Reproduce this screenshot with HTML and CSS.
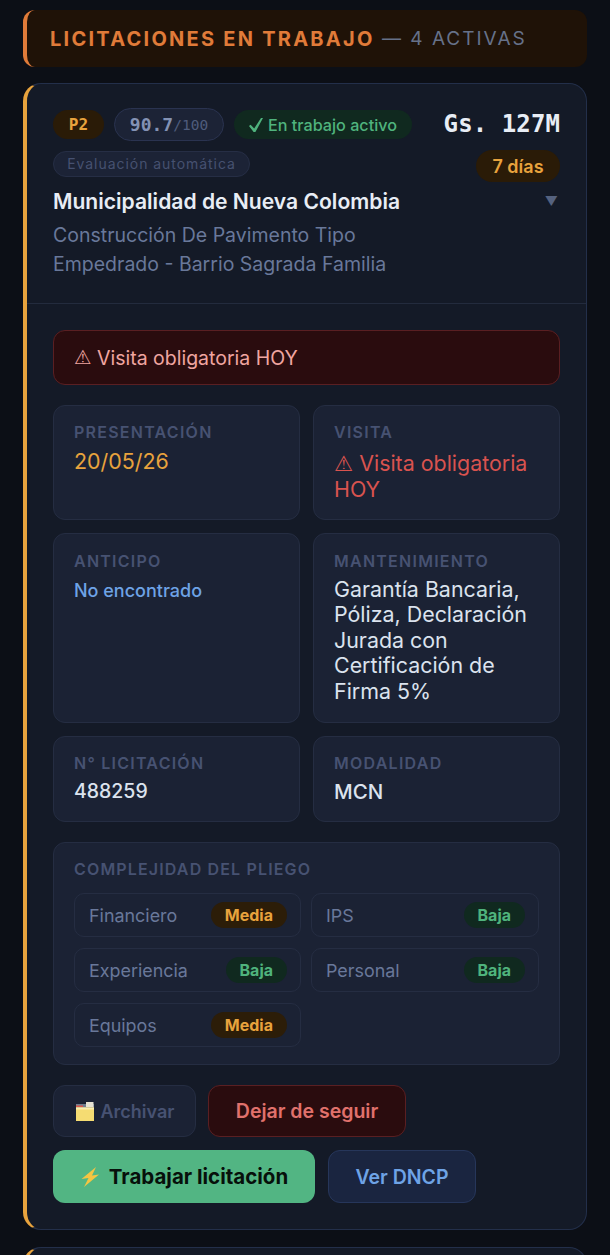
FILE: index.html
```html
<!DOCTYPE html>
<html lang="es">
<head>
<meta charset="utf-8">
<title>Licitaciones en trabajo</title>
<link rel="stylesheet" href="styles.css">
</head>
<body>
<main class="page">
  <header class="section-head">
    <strong>LICITACIONES EN TRABAJO</strong><span class="section-count"> — 4 ACTIVAS</span>
  </header>

  <article class="card">
    <div class="card-head">
      <div class="head-top">
        <div class="pills">
          <span class="pill pill-p">P2</span>
          <span class="pill pill-score"><b>90.7</b><i>/100</i></span>
          <span class="pill pill-active">
            <svg class="ico-check" viewBox="0 0 14 14" width="14" height="14" aria-hidden="true">
              <path fill="currentColor" d="M12 0h2L6.4 14H4.6L0 8l1.6-1.2 3.6 3.6z"/>
            </svg>
            <span>En trabajo activo</span>
          </span>
          <span class="pill pill-auto">Evaluación automática</span>
        </div>
        <div class="head-right">
          <span class="amount">Gs. 127M</span>
          <span class="pill pill-days">7 días</span>
        </div>
      </div>
      <div class="title-row">
        <h2>Municipalidad de Nueva Colombia</h2>
        <span class="caret">▼</span>
      </div>
      <p class="desc">Construcción De Pavimento Tipo<br>Empedrado - Barrio Sagrada Familia</p>
    </div>

    <div class="card-body">
      <div class="alert"><span class="warn">⚠</span> Visita obligatoria HOY</div>

      <div class="grid">
        <div class="cell cell-a">
          <div class="label">PRESENTACIÓN</div>
          <div class="value-amber">20/05/26</div>
        </div>
        <div class="cell cell-a">
          <div class="label">VISITA</div>
          <div class="value-red"><span class="warn">⚠</span> Visita obligatoria HOY</div>
        </div>
        <div class="cell cell-b">
          <div class="label">ANTICIPO</div>
          <div class="value-blue">No encontrado</div>
        </div>
        <div class="cell cell-b">
          <div class="label">MANTENIMIENTO</div>
          <div class="value-white">Garantía Bancaria, Póliza, Declaración Jurada con Certificación de Firma 5%</div>
        </div>
        <div class="cell cell-c">
          <div class="label">N° LICITACIÓN</div>
          <div class="value-num">488259</div>
        </div>
        <div class="cell cell-c">
          <div class="label">MODALIDAD</div>
          <div class="value-mod">MCN</div>
        </div>
      </div>

      <section class="complex">
        <div class="label label-wide">COMPLEJIDAD DEL PLIEGO</div>
        <div class="complex-grid">
          <div class="item"><span>Financiero</span><b class="tag tag-m">Media</b></div>
          <div class="item"><span>IPS</span><b class="tag tag-b">Baja</b></div>
          <div class="item"><span>Experiencia</span><b class="tag tag-b">Baja</b></div>
          <div class="item"><span>Personal</span><b class="tag tag-b">Baja</b></div>
          <div class="item"><span>Equipos</span><b class="tag tag-m">Media</b></div>
        </div>
      </section>

      <div class="actions">
        <button class="btn btn-archive">
          <svg class="ico-folder" viewBox="0 0 20 21" width="20" height="21" aria-hidden="true">
            <path fill="#6f7c8f" d="M1 3h18v5H1z"/>
            <path fill="#e6e2d2" d="M11 1h7.5v5H11z"/>
            <path fill="#d9574a" d="M1 4.5h7V6H1z"/>
            <path fill="#f5dc72" d="M1 6.5h18V20H1z"/>
            <path fill="#fbeeb0" d="M1 6.5h18v2H1z"/>
          </svg>
          Archivar
        </button>
        <button class="btn btn-unfollow">Dejar de seguir</button>
      </div>
      <div class="actions actions-2">
        <button class="btn btn-work">
          <svg class="ico-bolt" viewBox="0 0 20 22" width="20" height="22" aria-hidden="true">
            <path fill="#f5c542" d="M16 1 1.5 13l7-1L4 21 19 8.5l-7 1z"/>
          </svg>
          Trabajar licitación
        </button>
        <button class="btn btn-dncp">Ver DNCP</button>
      </div>
    </div>
  </article>

  <div class="card card-next"></div>
</main>
</body>
</html>
```
FILE: styles.css
```css
* { box-sizing: border-box; }
html, body { margin: 0; height: 100%; }
body {
  background: #0c0f16;
  font-family: Inter, "Noto Sans", sans-serif;
  color: #e2e8f0;
  overflow: hidden;
}
.page { padding: 10px 23px 0; }

.section-head {
  height: 57px;
  display: flex;
  align-items: center;
  white-space: pre;
  padding-left: 23px;
  background: #1f1207;
  border-left: 4px solid #e07b39;
  border-radius: 12px;
  font-size: 20px;
  letter-spacing: 2.25px;
}
.section-head strong { color: #e07b39; font-weight: 700; }
.section-count { color: #667189; font-weight: 400; font-size: 19px; letter-spacing: 2px; }

.card {
  background: #141a27;
  border: 1px solid #232f4a;
  border-left: 4px solid #e8a33d;
  border-radius: 18px;
  margin-top: 16px;
  height: 1147px;
}
.card-next { margin-top: 17px; height: 60px; }

.card-head {
  padding: 24px 26px 0;
  height: 220px;
  border-bottom: 1px solid #232b3d;
}
.head-top { display: flex; justify-content: space-between; }
.pills { display: flex; flex-wrap: wrap; align-items: center; align-content: flex-start; gap: 10px; width: 370px; }
.pill {
  display: inline-flex;
  align-items: center;
  justify-content: center;
  border-radius: 99px;
  white-space: nowrap;
}
.pill-p {
  width: 51px; height: 29px;
  background: #2a1b07; color: #e8a33d;
  font: 700 16px "DejaVu Sans Mono", monospace;
}
.pill-score {
  width: 110px; height: 33px;
  background: #1c2336; border: 1px solid #2a3350;
  font-family: "DejaVu Sans Mono", monospace;
}
.pill-score b { color: #8392b4; font-size: 18px; font-weight: 700; }
.pill-score i { color: #4f5c7c; font-size: 14.5px; font-style: normal; }
.pill-active {
  width: 178px; height: 29px;
  gap: 5px;
  background: #10291f; color: #4fb37d;
  font-size: 16.2px; font-weight: 500;
}
.ico-check { flex: none; }
.pill-auto {
  width: 197px; height: 26px;
  padding-bottom: 1px;
  background: #1c2336; border: 1px solid #262e45; color: #465170;
  font-size: 14px; letter-spacing: .95px;
}
.head-right { display: flex; flex-direction: column; align-items: flex-end; gap: 11px; padding-top: 1px; }
.amount {
  font: 700 24px/30px "DejaVu Sans Mono", monospace;
  color: #e8edf5;
  letter-spacing: .1px;
}
.pill-days {
  width: 84px; height: 32px;
  background: #2a1b07; color: #e8a33d;
  font-size: 18px; font-weight: 600;
}
.title-row { display: flex; justify-content: space-between; align-items: center; margin-top: 4px; height: 30px; }
h2 { margin: 0; font-size: 21.1px; font-weight: 600; color: #e8edf5; }
.caret { color: #55627f; font-size: 13px; padding-right: 2px; }
.desc { margin: 5px 0 0; font-size: 19.5px; line-height: 29px; color: #69789a; }

.card-body { padding: 26px 26px 0; }
.alert {
  height: 55px;
  display: flex; align-items: center;
  white-space: pre;
  padding-left: 20px;
  background: #2a0c0e;
  border: 1px solid #5a1f22;
  border-radius: 12px;
  color: #f0a5a0;
  font-size: 19.5px;
}
.warn { font-family: "DejaVu Sans", sans-serif; }

.grid {
  display: grid;
  grid-template-columns: 247px 247px;
  column-gap: 13px;
  row-gap: 13px;
  margin-top: 20px;
}
.cell {
  background: #1b2234;
  border: 1px solid #252d42;
  border-radius: 12px;
  padding: 17px 20px 0;
}
.cell-a { height: 115px; padding-top: 16px; }
.cell-b { height: 190px; }
.cell-c { height: 86px; padding-top: 16px; }
.label {
  font-size: 16px;
  line-height: 20px;
  font-weight: 600;
  letter-spacing: 1.25px;
  color: #475272;
}
.label-wide { letter-spacing: 1.15px; }
.value-amber { color: #e8a33d; font-size: 21.4px; line-height: 27px; margin-top: 6px; }
.value-red { color: #d9534f; font-size: 21.4px; line-height: 25.5px; margin-top: 9px; }
.value-white { color: #dbe3ee; font-size: 21.4px; line-height: 25.4px; margin-top: 6px; }
.value-blue { color: #6ea3e6; font-size: 18px; line-height: 24px; margin-top: 8px; font-weight: 500; }
.value-num { color: #dbe3ee; font-size: 19.5px; line-height: 24px; margin-top: 6px; font-weight: 500; }
.value-mod { color: #dbe3ee; font-size: 20.5px; line-height: 24px; margin-top: 7px; font-weight: 500; }

.complex {
  margin-top: 20px;
  height: 223px;
  background: #1b2234;
  border: 1px solid #252d42;
  border-radius: 12px;
  padding: 16px 20px 0;
}
.complex-grid {
  display: grid;
  grid-template-columns: 227px 228px;
  column-gap: 10px;
  row-gap: 11px;
  margin-top: 14px;
}
.item {
  height: 44px;
  display: flex; align-items: center; justify-content: space-between;
  padding: 0 13px 0 14px;
  border: 1px solid #252d42;
  border-radius: 10px;
  font-size: 17.9px;
  color: #69789a;
}
.tag {
  height: 26px;
  display: inline-flex; align-items: center;
  padding: 0 14px;
  border-radius: 99px;
  font-size: 16px; font-weight: 700;
}
.tag-m { background: #2c1d08; color: #e8a33d; }
.tag-b { background: #10291f; color: #4fb37d; }

.actions { display: flex; gap: 12px; margin-top: 20px; }
.actions-2 { margin-top: 13px; gap: 13px; }
.btn {
  display: inline-flex; align-items: center; justify-content: center;
  height: 52px;
  border-radius: 12px;
  font-family: inherit;
  font-size: 19.5px;
  font-weight: 600;
  padding: 0;
}
.btn-archive { width: 143px; background: #1b2234; border: 1px solid #252d42; color: #475272; gap: 6px; font-size: 18px; }
.btn-unfollow { width: 198px; background: #2a0c0e; border: 1px solid #5a1f22; color: #e0716c; }
.btn-work { width: 262px; background: #52b583; border: 0; color: #07100b; gap: 9px; font-weight: 700; height: 53px; font-size: 20.5px; }
.btn-dncp { width: 148px; background: #1a2540; border: 1px solid #26365a; color: #6ea3e6; height: 53px; }
```
